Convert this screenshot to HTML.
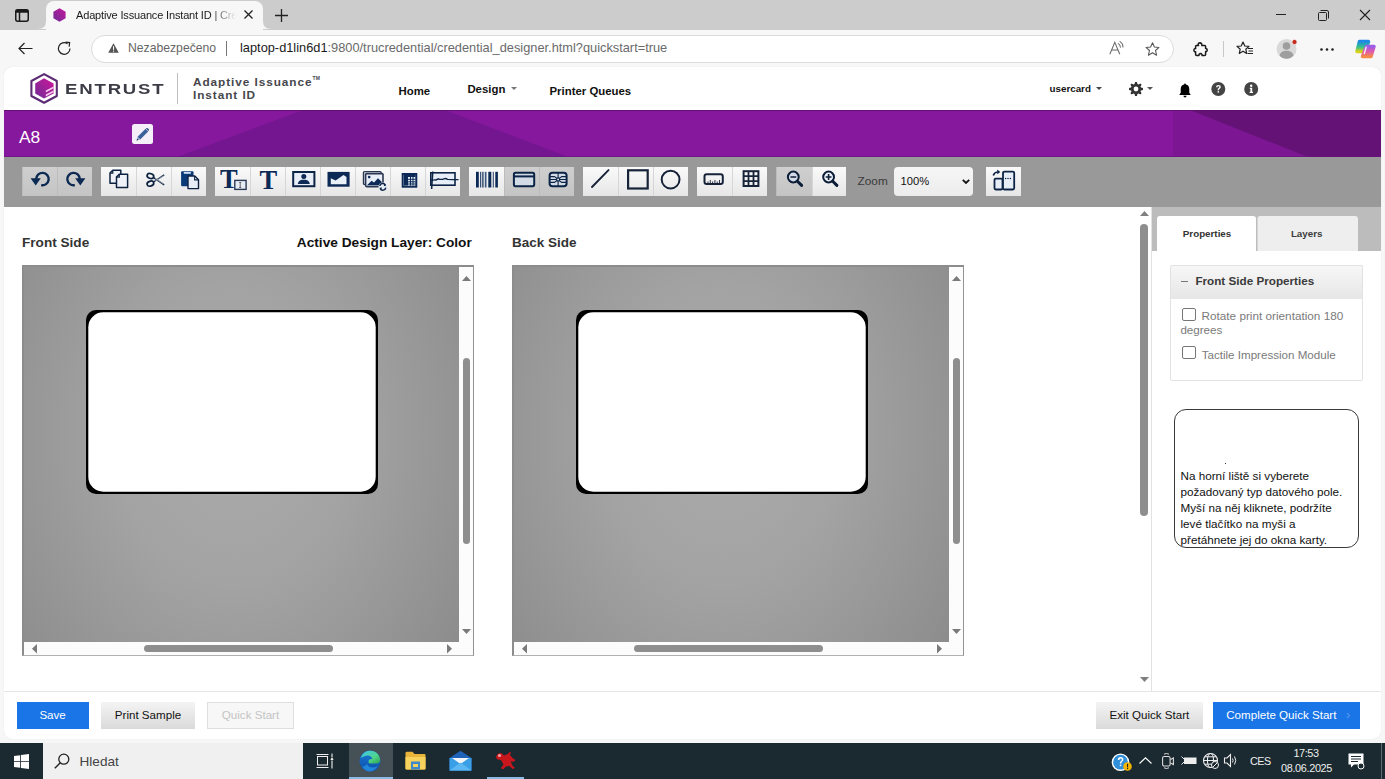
<!DOCTYPE html>
<html><head><meta charset="utf-8">
<style>
*{box-sizing:border-box;margin:0;padding:0}
html,body{width:1385px;height:779px;overflow:hidden}
body{position:relative;background:#f7f7f7;font-family:"Liberation Sans",sans-serif;color:#222}
.a{position:absolute}
.t{position:absolute;white-space:nowrap;line-height:1}
svg{position:absolute;overflow:visible}
/* chrome */
#tabstrip{left:0;top:0;width:1385px;height:30px;background:#cccccc}
#tab{left:46px;top:1px;width:217px;height:30px;background:#f7f7f7;border-radius:8px 8px 0 0}
#addr{left:91px;top:35px;width:1083px;height:28px;background:#fff;border:1px solid #dcdcdc;border-radius:14px}
/* page */
#page{left:4px;top:67px;width:1377px;height:672px;background:#fff;border-radius:8px;overflow:hidden;box-shadow:0 0 1px rgba(0,0,0,.15)}
#banner{left:0;top:43px;width:1377px;height:47px;background:#86189e;overflow:hidden}
#tools{left:0;top:90px;width:1377px;height:50px;background:#999999}
.grp{position:absolute;top:10px;height:29px;background:#f4f4f4;display:flex}
.btn{position:relative;width:35px;height:29px;background:linear-gradient(#fafafa,#e6e6e6);border-left:1px solid #d6d6d6}
.btn:first-child{border-left:none}
.btn.dis{background:linear-gradient(#cfcfcf,#c4c4c4);border-left:1px solid #bcbcbc}
.btn svg{left:0;top:0}
.cv{width:452px;height:391px;border-top:2px solid #8c8c8c;border-left:2px solid #8c8c8c;border-right:1.2px solid #929292;border-bottom:1.5px solid #b0b0b0;background:#fcfcfc}
.vp{position:absolute;left:0;top:0;width:435px;height:374.5px;background:radial-gradient(ellipse 68% 100% at 48% 45%,#ababab 0%,#a3a3a3 40%,#8a8a8a 100%)}
.card{position:absolute}
.vs{position:absolute;left:435px;top:0;width:14px;height:374.5px}
.hs{position:absolute;left:0;top:374.5px;width:435px;height:13px}
.th{position:absolute;background:#8e8e8e;border-radius:3.5px}
.btnb,.btng,.btnd{font-size:11.6px;line-height:26px;text-align:center;white-space:nowrap}
.btnb{background:#1a75e6;color:#fff}
.btng{background:linear-gradient(#f4f4f4,#dadada);color:#111}
.btnd{background:#f7f7f7;border:1px solid #dedede;color:#c4c4c4;line-height:24.6px}
#taskbar{left:0;top:743px;width:1385px;height:36px;background:#1b2930}
</style></head><body>

<!-- ===== browser chrome ===== -->
<div id="tabstrip" class="a"></div>
<!-- sidebar icon -->
<svg style="left:15px;top:9px" width="14" height="13" viewBox="0 0 14 13"><rect x="0.75" y="0.75" width="12.5" height="11.5" rx="2" fill="none" stroke="#1a1a1a" stroke-width="1.5"/><rect x="0.75" y="0.75" width="12.5" height="3" fill="#1a1a1a"/><line x1="4.5" y1="3" x2="4.5" y2="12" stroke="#1a1a1a" stroke-width="1.5"/></svg>
<div id="tab" class="a">
  <svg style="left:-8px;top:20px" width="8" height="8" viewBox="0 0 8 8"><path d="M0 8 Q8 8 8 0 L8 8 Z" fill="#f7f7f7"/></svg>
  <svg style="left:217px;top:20px" width="8" height="8" viewBox="0 0 8 8"><path d="M8 8 Q0 8 0 0 L0 8 Z" fill="#f7f7f7"/></svg>
</div>
<!-- favicon hexagon -->
<svg style="left:53px;top:8px" width="13" height="14" viewBox="0 0 13 14"><defs><linearGradient id="fav" x1="1" y1="0" x2="0" y2="1"><stop offset="0" stop-color="#c4179c"/><stop offset="1" stop-color="#6f2c97"/></linearGradient></defs><path d="M6.5 0.3 L12.6 3.7 V10.3 L6.5 13.7 L0.4 10.3 V3.7 Z" fill="url(#fav)"/></svg>
<div class="t" style="left:76px;top:9.5px;font-size:11px;letter-spacing:-0.16px;color:#1a1a1a;width:160px;overflow:hidden;-webkit-mask-image:linear-gradient(90deg,#000 135px,transparent 160px)">Adaptive Issuance Instant ID | Credential Designer</div>
<svg style="left:244px;top:10px" width="9" height="9" viewBox="0 0 9 9"><path d="M0.5 0.5 L8.5 8.5 M8.5 0.5 L0.5 8.5" stroke="#222" stroke-width="1.3"/></svg>
<svg style="left:275px;top:9px" width="13" height="13" viewBox="0 0 13 13"><path d="M6.5 0 V13 M0 6.5 H13" stroke="#222" stroke-width="1.3"/></svg>
<!-- window controls -->
<svg style="left:1276px;top:14px" width="10" height="2" viewBox="0 0 10 2"><line x1="0" y1="0.5" x2="10" y2="0.5" stroke="#222" stroke-width="1"/></svg>
<svg style="left:1318px;top:10px" width="11" height="11" viewBox="0 0 11 11"><rect x="0.5" y="2.5" width="8" height="8" rx="1" fill="none" stroke="#222" stroke-width="1"/><path d="M2.5 0.5 H9 Q10.5 0.5 10.5 2 V8.5" fill="none" stroke="#222" stroke-width="1"/></svg>
<svg style="left:1360px;top:10px" width="10" height="10" viewBox="0 0 10 10"><path d="M0 0 L10 10 M10 0 L0 10" stroke="#222" stroke-width="1.1"/></svg>

<!-- toolbar -->
<svg style="left:18px;top:42px" width="15" height="13" viewBox="0 0 15 13"><path d="M14.5 6.5 H1 M6.5 1 L1 6.5 L6.5 12" fill="none" stroke="#222" stroke-width="1.2"/></svg>
<svg style="left:57px;top:41px" width="15" height="15" viewBox="0 0 15 15"><path d="M13 7.5 A5.8 5.8 0 1 1 10.5 2.7" fill="none" stroke="#222" stroke-width="1.2"/><path d="M8.6 1.2 L12.6 1.6 L12.2 5.6" fill="none" stroke="#222" stroke-width="1.2"/></svg>
<div id="addr" class="a"></div>
<svg style="left:108px;top:43px" width="11" height="10" viewBox="0 0 11 10"><path d="M5.5 0.3 L10.8 9.7 H0.2 Z" fill="#555"/><rect x="5" y="3.2" width="1.1" height="3.6" fill="#fff"/><rect x="5" y="7.6" width="1.1" height="1.1" fill="#fff"/></svg>
<div class="t" style="left:128px;top:42px;font-size:12.2px;color:#666">Nezabezpečeno</div>
<div class="a" style="left:226px;top:41px;width:1px;height:15px;background:#777"></div>
<div class="t" style="left:240px;top:42px;font-size:12.8px;color:#1a1a1a">laptop-d1lin6d1<span style="color:#6a6a6a">:9800/trucredential/credential_designer.html?quickstart=true</span></div>
<!-- read aloud -->
<svg style="left:1109px;top:41px" width="16" height="14" viewBox="0 0 16 14"><path d="M0.8 13.2 L5.8 1.3 L10.8 13.2 M2.6 9 H9" fill="none" stroke="#6a6a6a" stroke-width="1.05"/><path d="M9.3 2.6 Q11.2 3.6 11.4 6.2 M11 0.6 Q13.8 2 14 6" fill="none" stroke="#6a6a6a" stroke-width="1.05" stroke-linecap="round"/></svg>
<!-- star -->
<svg style="left:1145px;top:41.5px" width="15" height="15" viewBox="0 0 15 15"><path d="M7.5 0.8 L9.4 5 L14 5.4 L10.5 8.5 L11.6 13.2 L7.5 10.8 L3.4 13.2 L4.5 8.5 L1 5.4 L5.6 5 Z" fill="none" stroke="#555" stroke-width="1.05" stroke-linejoin="round"/></svg>
<!-- extensions puzzle -->
<svg style="left:1193px;top:42px" width="15" height="15" viewBox="0 0 15 15"><path d="M5.5 1.2 Q7.5 0.3 8.6 1.8 Q9.2 3 8.8 3.6 H11.8 Q12.6 3.6 12.6 4.4 V6.6 Q14 6.4 14.2 8 Q14.2 9.8 12.6 9.6 V12.4 Q12.6 13.4 11.6 13.4 H9 Q9.3 11.8 7.6 11.6 Q5.9 11.6 6 13.4 H3.6 Q2.6 13.4 2.6 12.4 V9.8 Q1 10 0.9 8.2 Q0.9 6.5 2.6 6.6 V4.4 Q2.6 3.6 3.4 3.6 H5.6 Q4.6 2 5.5 1.2 Z" fill="none" stroke="#1a1a1a" stroke-width="1.5" stroke-linejoin="round"/></svg>
<div class="a" style="left:1223px;top:41px;width:1px;height:16px;background:#c8c8c8"></div>
<!-- favorites -->
<svg style="left:1236px;top:41px" width="18" height="15" viewBox="0 0 18 15"><path d="M7 1 L8.8 5 L13 5.4 L9.8 8.2 L10.7 12.4 L7 10.2 L3.3 12.4 L4.2 8.2 L1 5.4 L5.2 5 Z" fill="none" stroke="#222" stroke-width="1.2" stroke-linejoin="round"/><path d="M12 7.5 H17 M12.5 10 H17 M11.5 12.5 H17" stroke="#222" stroke-width="1.2"/></svg>
<!-- profile -->
<svg style="left:1276px;top:38px" width="22" height="22" viewBox="0 0 22 22"><circle cx="10.5" cy="11" r="10" fill="#d9d9d9"/><circle cx="10.5" cy="8" r="3.8" fill="#9e9e9e"/><path d="M3.5 17.5 Q4.5 12.8 10.5 12.8 Q16.5 12.8 17.5 17.5 Q14.5 20.8 10.5 20.8 Q6.5 20.8 3.5 17.5 Z" fill="#9e9e9e"/><circle cx="18.5" cy="4" r="2.6" fill="#c42b1c" stroke="#f7f7f7" stroke-width="0.8"/></svg>
<!-- more -->
<svg style="left:1320px;top:48px" width="14" height="3" viewBox="0 0 14 3"><circle cx="1.5" cy="1.5" r="1.3" fill="#222"/><circle cx="7" cy="1.5" r="1.3" fill="#222"/><circle cx="12.5" cy="1.5" r="1.3" fill="#222"/></svg>
<!-- copilot -->
<svg style="left:1355px;top:39px" width="21" height="20" viewBox="0 0 21 20"><defs><linearGradient id="cpA" x1="0" y1="0" x2="0" y2="1"><stop offset="0" stop-color="#1e88e5"/><stop offset=".55" stop-color="#35c28a"/><stop offset="1" stop-color="#d9d21a"/></linearGradient><linearGradient id="cpB" x1="0" y1="0" x2="0" y2="1"><stop offset="0" stop-color="#9b5de5"/><stop offset=".5" stop-color="#e05ab0"/><stop offset="1" stop-color="#f58a4a"/></linearGradient></defs><path d="M4.5 2.5 H13.5 L10.5 12.5 H2 Z" fill="url(#cpA)" stroke="url(#cpA)" stroke-width="3.5" stroke-linejoin="round"/><path d="M11.5 7.5 H19 L16 17.5 H7.5 Z" fill="url(#cpB)" stroke="url(#cpB)" stroke-width="3.5" stroke-linejoin="round"/><path d="M11.2 8 L9.3 14.5" stroke="#fff" stroke-width="1.3" stroke-linecap="round" opacity=".9"/></svg>

<!-- ===== page ===== -->
<div id="page" class="a">
  <!-- header (page coords: subtract 4,67) -->
  <svg style="left:26px;top:6px" width="28" height="31" viewBox="0 0 28 31"><defs><linearGradient id="lg1" x1="1" y1="0" x2="0" y2="1"><stop offset="0" stop-color="#cf169a"/><stop offset="1" stop-color="#6f2c97"/></linearGradient></defs><path d="M14.1 1.1 L26.8 8 V23 L14.1 29.8 L1.4 23 V8 Z" fill="none" stroke="#5b2b74" stroke-width="2.1" stroke-linejoin="round"/><path d="M14 5.2 L23.6 10.4 V20.6 L14 25.6 L5.2 20.6 V10.4 Z" fill="url(#lg1)"/><path d="M15.8 17.6 L23.6 13.4 V15.2 L15.8 19.4 Z M15.8 21.6 L23.6 17.4 V19.2 L15.8 23.4 Z" fill="#f6c9f0"/></svg>
  <div class="t" style="left:61px;top:14.8px;font-size:14.3px;font-weight:bold;letter-spacing:1.4px;color:#3c3c46;transform:scaleX(1.3);transform-origin:0 0">ENTRUST</div>
  <div class="a" style="left:173px;top:6px;width:1px;height:31px;background:#bdbdbd"></div>
  <div class="t" style="left:189px;top:9.4px;font-size:11.8px;font-weight:bold;letter-spacing:0.93px;color:#46464c;line-height:13px">Adaptive Issuance<br>Instant ID</div><div class="t" style="left:308.6px;top:9.2px;font-size:5px;font-weight:bold;color:#46464c">TM</div>
  <div class="t" style="left:394.5px;top:18.6px;font-size:11.4px;font-weight:bold;color:#111">Home</div>
  <div class="t" style="left:463.4px;top:16.8px;font-size:11.4px;font-weight:bold;color:#111">Design</div>
  <svg style="left:507px;top:20px" width="6" height="3" viewBox="0 0 6 3"><path d="M0 0 H6 L3 3 Z" fill="#777"/></svg>
  <div class="t" style="left:545.5px;top:18.6px;font-size:11.4px;font-weight:bold;color:#111">Printer Queues</div>
  <div class="t" style="left:1045.5px;top:17.3px;font-size:9.8px;font-weight:bold;color:#111">usercard</div>
  <svg style="left:1091.5px;top:20px" width="6" height="3" viewBox="0 0 6 3"><path d="M0 0 H6 L3 3 Z" fill="#444"/></svg>
  <!-- gear -->
  <svg style="left:1124.5px;top:15px" width="14" height="14" viewBox="0 0 14 14"><path fill="#333" fill-rule="evenodd" d="M6 0 H8 L8.4 2 L9.6 2.5 L11.3 1.4 L12.6 2.7 L11.5 4.4 L12 5.6 L14 6 V8 L12 8.4 L11.5 9.6 L12.6 11.3 L11.3 12.6 L9.6 11.5 L8.4 12 L8 14 H6 L5.6 12 L4.4 11.5 L2.7 12.6 L1.4 11.3 L2.5 9.6 L2 8.4 L0 8 V6 L2 5.6 L2.5 4.4 L1.4 2.7 L2.7 1.4 L4.4 2.5 L5.6 2 Z M7 4.6 A2.4 2.4 0 1 0 7 9.4 A2.4 2.4 0 1 0 7 4.6 Z"/></svg>
  <svg style="left:1143px;top:20px" width="6" height="3" viewBox="0 0 6 3"><path d="M0 0 H6 L3 3 Z" fill="#555"/></svg>
  <!-- bell -->
  <svg style="left:1174.5px;top:16px" width="12" height="15" viewBox="0 0 12 15"><path d="M6 0.5 Q6.9 0.5 6.9 1.5 Q10.3 2.3 10.3 6.3 V9.8 L11.8 12 H0.2 L1.7 9.8 V6.3 Q1.7 2.3 5.1 1.5 Q5.1 0.5 6 0.5 Z" fill="#000"/><path d="M4.4 12.8 H7.6 Q7.4 14.6 6 14.6 Q4.6 14.6 4.4 12.8 Z" fill="#000"/></svg>
  <!-- question -->
  <svg style="left:1207px;top:15px" width="15" height="14" viewBox="0 0 15 14"><circle cx="7.3" cy="7" r="7" fill="#444"/><path d="M5 5.3 Q5 2.9 7.4 2.9 Q9.8 2.9 9.8 5 Q9.8 6.3 8.5 6.9 Q7.9 7.3 7.9 8.2 H6.6 Q6.6 6.7 7.6 6.1 Q8.3 5.7 8.3 5.1 Q8.3 4.2 7.4 4.2 Q6.5 4.2 6.5 5.3 Z" fill="#fff"/><rect x="6.6" y="9.1" width="1.4" height="1.5" fill="#fff"/></svg>
  <!-- info -->
  <svg style="left:1239.5px;top:15px" width="15" height="14" viewBox="0 0 15 14"><circle cx="7.2" cy="7" r="7" fill="#444"/><circle cx="7.2" cy="3.7" r="1.2" fill="#fff"/><path d="M5.8 5.7 H8.2 V9.8 H9 V11 H5.6 V9.8 H6.4 V6.9 H5.8 Z" fill="#fff"/></svg>
  <div id="banner" class="a">
    <svg style="left:0;top:0" width="1377" height="47" viewBox="0 0 1377 47"><path d="M299 0 H441 L564 47 H173 Z" fill="#741690"/><path d="M1169 0 H1377 V47 H1169 Z" fill="#7c1693"/><path d="M1186 0 H1377 V47 H1304 Z" fill="#641276"/><rect x="0" y="0" width="1377" height="1" fill="#5a1068" opacity=".8"/><rect x="0" y="46" width="1377" height="1" fill="#6a1480" opacity=".7"/></svg>
    <div class="t" style="left:15px;top:19.4px;font-size:17.4px;color:#fff">A8</div>
    <div class="a" style="left:128px;top:14px;width:21px;height:19.6px;background:#f3eef8;border-radius:2.5px"></div>
    <svg style="left:132px;top:17.5px" width="13" height="13" viewBox="0 0 13 13"><path d="M9.6 0.8 L12.2 3.4 L4.2 11.4 L1.6 8.8 Z" fill="#3b5f9a"/><path d="M10.6 0 Q11.2 -0.3 11.8 0.3 L12.7 1.2 Q13.3 1.8 13 2.4 L12.6 3 L10 0.4 Z" fill="#2a4a7c"/><path d="M1.6 8.8 L4.2 11.4 L0.6 12.4 Z" fill="#8aa2c8"/><path d="M0.6 12.4 L1.1 10.8 L2.2 11.9 Z" fill="#223"/></svg>
  </div>
  <div id="tools" class="a">
    <!-- abs y 167 => tools-local top 10 ; abs x => local x-4 -->
    <div class="grp" style="left:18px;width:70px">
      <div class="btn dis"><svg width="35" height="29" viewBox="0 0 35 29"><path d="M13.3 12 A6.2 6.2 0 1 1 18.2 18.1" fill="none" stroke="#0c2a52" stroke-width="2.4"/><path d="M7.6 11.2 H17.8 L12.7 18.4 Z" fill="#0c2a52"/></svg></div>
      <div class="btn dis"><svg width="35" height="29" viewBox="0 0 35 29"><path d="M21.7 12 A6.2 6.2 0 1 0 16.8 18.1" fill="none" stroke="#0c2a52" stroke-width="2.4"/><path d="M27.4 11.2 H17.2 L22.3 18.4 Z" fill="#0c2a52"/></svg></div>
    </div>
    <div class="grp" style="left:97px;width:105px">
      <div class="btn"><svg width="35" height="29" viewBox="0 0 35 29"><path d="M11.8 3.2 H19.8 V16.3 H9 V6 Z" fill="#eef2f8" stroke="#0d2240" stroke-width="1.5" stroke-linejoin="round"/><path d="M9 6.2 H11.8 V3.2" fill="none" stroke="#0d2240" stroke-width="1.2"/><path d="M18.3 7.2 H26.6 V20.6 H15.5 V10 Z" fill="#eef2f8" stroke="#0d2240" stroke-width="1.5" stroke-linejoin="round"/><path d="M15.5 10.2 H18.3 V7.2" fill="none" stroke="#0d2240" stroke-width="1.2"/></svg></div>
      <div class="btn"><svg width="35" height="29" viewBox="0 0 35 29"><ellipse cx="13.4" cy="9" rx="3.4" ry="2.4" transform="rotate(20 13.4 9)" fill="none" stroke="#0d2240" stroke-width="1.7"/><ellipse cx="13.4" cy="16.6" rx="3.4" ry="2.4" transform="rotate(-20 13.4 16.6)" fill="none" stroke="#0d2240" stroke-width="1.7"/><path d="M16.6 10.6 L27.2 17.8 M16.6 15 L27.2 7.8" stroke="#0d2240" stroke-width="1.4"/><path d="M18 11.3 L26.5 17 M18 14.3 L26.5 8.6" stroke="#eef2f8" stroke-width="0.5"/></svg></div>
      <div class="btn"><svg width="35" height="29" viewBox="0 0 35 29"><rect x="9.1" y="4.2" width="12.4" height="15" rx="1" fill="#0b3a78"/><rect x="11.8" y="5" width="7" height="1.8" fill="#cfe0f5"/><path d="M16 9 H22.8 L26.5 12.7 V21.6 H16 Z" fill="#e8eef8" stroke="#0d2240" stroke-width="1.4" stroke-linejoin="round"/><path d="M22.6 9 V12.9 H26.5" fill="none" stroke="#0d2240" stroke-width="1.1"/></svg></div>
    </div>
    <div class="grp" style="left:211px;width:245px">
      <div class="btn"><div class="t" style="left:5px;top:-0.8px;font-family:'Liberation Serif',serif;font-weight:bold;font-size:26.5px;line-height:27px;color:#0c2a55">T</div><svg width="35" height="29" viewBox="0 0 35 29"><rect x="19.8" y="13.4" width="11.3" height="9" fill="#e6ecf5" stroke="#2a3a55" stroke-width="1.4"/><path d="M24.2 15.5 H26.2 M25.2 15.5 V20.5 M24.2 20.5 H26.2" stroke="#555" stroke-width="0.9"/></svg></div>
      <div class="btn"><div class="t" style="left:8.5px;top:-0.4px;font-family:'Liberation Serif',serif;font-weight:bold;font-size:26.5px;line-height:27px;color:#0c2a55">T</div></div>
      <div class="btn"><svg width="35" height="29" viewBox="0 0 35 29"><rect x="7.2" y="5" width="21.2" height="14.2" fill="#e8eef8" stroke="#0c2445" stroke-width="2"/><circle cx="17.8" cy="9.6" r="2.5" fill="#0c2a55"/><path d="M11.8 17 Q12.5 13.2 16 12.8 H19.6 Q23.1 13.2 23.8 17 Z" fill="#0c2a55"/></svg></div>
      <div class="btn"><svg width="35" height="29" viewBox="0 0 35 29"><rect x="6.5" y="4.9" width="22.1" height="14.8" fill="#0c2a55"/><path d="M9.8 17.2 V11.2 L14.6 13.4 L22.5 8 L25.5 10 V17.2 Z" fill="#eaf0f8"/></svg></div>
      <div class="btn"><svg width="35" height="29" viewBox="0 0 35 29"><rect x="7.5" y="4.6" width="17.6" height="12.8" rx="1" fill="#e8eef8" stroke="#2a3650" stroke-width="1.4"/><rect x="9.6" y="6.6" width="17.4" height="13" rx="1" fill="#e8eef8" stroke="#2a3650" stroke-width="1.6"/><circle cx="13.2" cy="10.1" r="1.3" fill="#0c2a55"/><path d="M11 18.2 L15.6 13.8 L18 15.6 L22 11.3 L25.8 15 V18.2 Z" fill="#0c2a55"/><circle cx="26.8" cy="19.8" r="4.3" fill="#e8eef8"/><path d="M23.8 19 A3 3 0 0 1 29.4 18 M29.8 20.6 A3 3 0 0 1 24.2 21.6" fill="none" stroke="#0c2445" stroke-width="1.5"/><path d="M28.2 16.5 L30.3 18.5 L27.8 19.3 Z M25.4 23.1 L23.3 21.1 L25.8 20.3 Z" fill="#0c2445"/></svg></div>
      <div class="btn"><svg width="35" height="29" viewBox="0 0 35 29"><rect x="11.7" y="7" width="13.6" height="12.7" fill="#e8eef8" stroke="#0c2a55" stroke-width="2"/><path d="M13 8 H24.4 V10 H17 V18.6 H13 Z" fill="#0c2a55"/><path d="M17 12.3 H24.4 M17 14.8 H24.4 M17 17 H24.4 M19.5 10 V18.6 M22 10 V18.6 M13 12.3 H15.8 M13 14.8 H15.8 M13 17 H15.8" stroke="#0c2a55" stroke-width="1"/></svg></div>
      <div class="btn"><svg width="35" height="29" viewBox="0 0 35 29"><rect x="4.8" y="5.8" width="24.2" height="12.4" fill="#e8eef8" stroke="#0c2445" stroke-width="1.6"/><path d="M6.8 4.5 L5.6 22" stroke="#0c2445" stroke-width="1.5"/><path d="M5.2 13.5 Q8 12.5 10 13 L12.5 11.8 Q15 13 18 11.8 Q20 11 21.5 12.4 Q26 12.6 32.5 12.6" fill="none" stroke="#0c2445" stroke-width="1.4"/></svg></div>
    </div>
    <div class="grp" style="left:465px;width:105px">
      <div class="btn"><svg width="35" height="29" viewBox="0 0 35 29"><g fill="#0b2a55"><rect x="7" y="4.8" width="2.8" height="15.7"/><rect x="11.2" y="4.8" width="1" height="15.7"/><rect x="13.3" y="4.8" width="1.2" height="15.7"/><rect x="15.8" y="4.8" width="1.7" height="15.7" fill="#3c5a80"/><rect x="19.3" y="4.8" width="3" height="15.7"/><rect x="23.8" y="4.8" width="0.9" height="15.7"/><rect x="26.3" y="4.8" width="2.6" height="15.7"/></g></svg></div>
      <div class="btn dis"><svg width="35" height="29" viewBox="0 0 35 29"><rect x="8.9" y="5.8" width="20.3" height="13.4" rx="1.6" fill="#d3dbe7" stroke="#0c2445" stroke-width="2"/><rect x="8.9" y="8.4" width="20.3" height="2" fill="#0c2445"/></svg></div>
      <div class="btn dis"><svg width="35" height="29" viewBox="0 0 35 29"><rect x="9.6" y="5.8" width="17" height="13.4" rx="2.8" fill="#d3dbe7" stroke="#0c2445" stroke-width="2"/><circle cx="18.1" cy="12.5" r="1.6" fill="none" stroke="#0c2445" stroke-width="1.2"/><path d="M9.6 9.6 H14.5 L16.8 11.4 M9.6 12.5 H16.5 M9.6 15.4 H14.5 L16.8 13.6 M26.6 9.6 H21.7 L19.4 11.4 M26.6 12.5 H19.7 M26.6 15.4 H21.7 L19.4 13.6 M18.1 5.8 V10.9 M18.1 14.1 V19.2" fill="none" stroke="#0c2445" stroke-width="1.1"/></svg></div>
    </div>
    <div class="grp" style="left:579px;width:105px">
      <div class="btn"><svg width="35" height="29" viewBox="0 0 35 29"><path d="M9 20 L25.5 3.1" stroke="#172339" stroke-width="1.9" stroke-linecap="round"/></svg></div>
      <div class="btn"><svg width="35" height="29" viewBox="0 0 35 29"><rect x="9.1" y="3.3" width="19.6" height="18.2" fill="none" stroke="#172339" stroke-width="2.2"/></svg></div>
      <div class="btn"><svg width="35" height="29" viewBox="0 0 35 29"><circle cx="16.6" cy="12.6" r="8.9" fill="none" stroke="#172339" stroke-width="2"/></svg></div>
    </div>
    <div class="grp" style="left:693px;width:70px">
      <div class="btn"><svg width="35" height="29" viewBox="0 0 35 29"><rect x="7.5" y="7.3" width="18.3" height="9.6" rx="2.2" fill="none" stroke="#172339" stroke-width="2"/><path d="M11 16.9 V14.5 M13.3 16.9 V13 M15.6 16.9 V14.5 M17.9 16.9 V13 M20.2 16.9 V14.5 M22.5 16.9 V13" stroke="#172339" stroke-width="0.9"/></svg></div>
      <div class="btn"><svg width="35" height="29" viewBox="0 0 35 29"><rect x="10.6" y="4.2" width="14.8" height="14.8" fill="none" stroke="#172339" stroke-width="2"/><path d="M15.5 4.2 V19 M20.5 4.2 V19 M10.6 9.1 H25.4 M10.6 14.1 H25.4" stroke="#172339" stroke-width="1.8"/></svg></div>
    </div>
    <div class="grp" style="left:771.5px;width:70px">
      <div class="btn dis" style="width:36px"><svg width="36" height="29" viewBox="0 0 36 29"><circle cx="16.3" cy="10" r="5.4" fill="#d3dbe7" stroke="#0c1e38" stroke-width="2"/><path d="M13.4 10 H19.2" stroke="#0c1e38" stroke-width="1.6"/><path d="M20.4 14.2 L24.6 18.4" stroke="#0c1e38" stroke-width="3" stroke-linecap="round"/></svg></div>
      <div class="btn" style="width:34px"><svg width="34" height="29" viewBox="0 0 34 29"><circle cx="15.6" cy="10" r="5.4" fill="#eef2f8" stroke="#0c1e38" stroke-width="2"/><path d="M12.7 10 H18.5 M15.6 7.1 V12.9" stroke="#0c1e38" stroke-width="1.6"/><path d="M19.7 14.2 L23.9 18.4" stroke="#0c1e38" stroke-width="3" stroke-linecap="round"/></svg></div>
    </div>
    <div class="t" style="left:853.6px;top:19.4px;font-size:11.8px;color:#3a3a3a">Zoom</div>
    <div class="a" style="left:890px;top:10px;width:79px;height:28.5px;border-radius:4px;background:linear-gradient(#f6f6f6,#ececec)"></div>
    <div class="t" style="left:896.5px;top:19.2px;font-size:11.2px;color:#111">100%</div>
    <svg style="left:958px;top:21.5px" width="8" height="5" viewBox="0 0 8 5"><path d="M0.8 0.8 L4 4 L7.2 0.8" fill="none" stroke="#111" stroke-width="1.8"/></svg>
    <div class="grp" style="left:982px;width:35px;height:29.5px;top:9.5px">
      <div class="btn"><svg width="35" height="29" viewBox="0 0 35 29"><rect x="8.5" y="11.6" width="8" height="10.9" rx="1.2" fill="#e8eef8" stroke="#0c2445" stroke-width="1.8"/><rect x="17" y="4.6" width="11.2" height="17.9" rx="1.4" fill="#e8eef8" stroke="#0c2445" stroke-width="1.8"/><circle cx="19.6" cy="11.5" r="0.75" fill="#0c2445"/><circle cx="22" cy="11.5" r="0.75" fill="#0c2445"/><circle cx="24.4" cy="11.5" r="0.75" fill="#0c2445"/><path d="M7.3 8.4 Q8.2 5.3 11.6 5" fill="none" stroke="#0c2445" stroke-width="1.7"/><path d="M11.2 2.6 L14.3 4.9 L11.2 7.3 Z" fill="#0c2445"/></svg></div>
    </div>
  </div>
  <!-- ===== content (page coords = abs - (4,67)) ===== -->
  <div class="t" style="left:18px;top:168.9px;font-size:13.6px;font-weight:bold;color:#333">Front Side</div>
  <div class="t" style="left:292.8px;top:168.8px;font-size:13.7px;font-weight:bold;color:#111">Active Design Layer: Color</div>
  <div class="t" style="left:508px;top:168.6px;font-size:13.5px;font-weight:bold;color:#333">Back Side</div>

  <!-- front canvas: abs x22 y265 -->
  <div class="a cv" style="left:18px;top:198px">
    <div class="vp"></div>
    <svg class="card" style="left:62px;top:43.2px" width="293" height="185" viewBox="0 0 293 185"><rect x="0" y="0" width="292" height="184" rx="10" fill="#000"/><rect x="2.3" y="2.3" width="287.4" height="179.4" rx="15" fill="#fff"/></svg>
    <div class="vs"><svg style="left:3px;top:8.5px" width="9" height="5" viewBox="0 0 9 5"><path d="M0 5 L4.5 0 L9 5 Z" fill="#7a7a7a"/></svg><div class="th" style="left:4px;top:91px;width:7px;height:186px"></div><svg style="left:3px;top:362px" width="9" height="5" viewBox="0 0 9 5"><path d="M0 0 L4.5 5 L9 0 Z" fill="#7a7a7a"/></svg></div>
    <div class="hs"><svg style="left:8px;top:2.5px" width="5" height="9.5" viewBox="0 0 5 9.5"><path d="M5 0 L0 4.75 L5 9.5 Z" fill="#7a7a7a"/></svg><div class="th" style="left:120px;top:3.5px;width:189px;height:7px"></div><svg style="left:423px;top:2.5px" width="5" height="9.5" viewBox="0 0 5 9.5"><path d="M0 0 L5 4.75 L0 9.5 Z" fill="#7a7a7a"/></svg></div>
  </div>
  <!-- back canvas: abs x511.5 -->
  <div class="a cv" style="left:507.5px;top:198px">
    <div class="vp"></div>
    <svg class="card" style="left:62px;top:43.2px" width="293" height="185" viewBox="0 0 293 185"><rect x="0" y="0" width="292" height="184" rx="10" fill="#000"/><rect x="2.3" y="2.3" width="287.4" height="179.4" rx="15" fill="#fff"/></svg>
    <div class="vs"><svg style="left:3px;top:8.5px" width="9" height="5" viewBox="0 0 9 5"><path d="M0 5 L4.5 0 L9 5 Z" fill="#7a7a7a"/></svg><div class="th" style="left:4px;top:91px;width:7px;height:186px"></div><svg style="left:3px;top:362px" width="9" height="5" viewBox="0 0 9 5"><path d="M0 0 L4.5 5 L9 0 Z" fill="#7a7a7a"/></svg></div>
    <div class="hs"><svg style="left:8px;top:2.5px" width="5" height="9.5" viewBox="0 0 5 9.5"><path d="M5 0 L0 4.75 L5 9.5 Z" fill="#7a7a7a"/></svg><div class="th" style="left:120px;top:3.5px;width:189px;height:7px"></div><svg style="left:423px;top:2.5px" width="5" height="9.5" viewBox="0 0 5 9.5"><path d="M0 0 L5 4.75 L0 9.5 Z" fill="#7a7a7a"/></svg></div>
  </div>

  <!-- main scrollbar abs x1140-1148 -->
  <svg style="left:1136px;top:144px" width="9" height="5" viewBox="0 0 9 5"><path d="M0 5 L4.5 0 L9 5 Z" fill="#7f7f7f"/></svg>
  <div class="a th" style="left:1136.3px;top:157px;width:7.8px;height:292px;border-radius:4px"></div>
  <svg style="left:1136px;top:609.5px" width="9" height="5" viewBox="0 0 9 5"><path d="M0 0 L4.5 5 L9 0 Z" fill="#7f7f7f"/></svg>

  <!-- right panel abs x1151.5-1381 -->
  <div class="a" style="left:1147px;top:140px;width:1px;height:484px;background:#e2e2e2"></div>
  <div class="a" style="left:1148px;top:140px;width:229px;height:44.3px;background:#bcbcbc"></div>
  <div class="a" style="left:1153.3px;top:149.3px;width:99px;height:35px;background:#fff;border-radius:3px 3px 0 0"></div>
  <div class="a" style="left:1252.5px;top:149.3px;width:101px;height:35px;background:#eeeeee;border-radius:3px 3px 0 0;border-left:1px solid #d6d6d6"></div>
  <div class="t" style="left:1178.8px;top:162.4px;font-size:9.8px;font-weight:bold;color:#333">Properties</div>
  <div class="t" style="left:1286.9px;top:162.4px;font-size:9.8px;font-weight:bold;color:#3c3c3c">Layers</div>

  <div class="a" style="left:1166.4px;top:198px;width:193px;height:115.5px;border:1px solid #e2e2e2;border-radius:2px;background:#fff"></div>
  <div class="a" style="left:1166.4px;top:198px;width:193px;height:33.7px;border:1px solid #e2e2e2;border-bottom:none;border-radius:2px 2px 0 0;background:linear-gradient(#f7f7f7,#e6e6e6)"></div>
  <div class="a" style="left:1177px;top:213.5px;width:7px;height:1.6px;background:#777"></div>
  <div class="t" style="left:1191.4px;top:207.6px;font-size:11.7px;font-weight:bold;color:#3a3a3a">Front Side Properties</div>
  <div class="a" style="left:1178px;top:240.5px;width:13.5px;height:13px;border:1px solid #777;border-radius:2px;background:#fff"></div>
  <div class="t" style="left:1197.5px;top:243.1px;font-size:11.75px;color:#7a7a7a">Rotate print orientation 180</div>
  <div class="t" style="left:1176.4px;top:256.8px;font-size:11.6px;color:#7a7a7a">degrees</div>
  <div class="a" style="left:1178px;top:279.4px;width:13.5px;height:13px;border:1px solid #777;border-radius:2px;background:#fff"></div>
  <div class="t" style="left:1197.7px;top:281.9px;font-size:11.6px;color:#7a7a7a">Tactile Impression Module</div>

  <!-- tooltip abs 1174-1359 x 409-548 -->
  <div class="a" style="left:1170px;top:342.2px;width:185px;height:139.3px;border:1px solid #3a3a3a;border-radius:12px;background:#fff"></div>
  <div class="a" style="left:1221px;top:395.5px;width:1px;height:1px;background:#333"></div>
  <div class="a" style="left:1176.5px;top:401px;font-size:11.7px;line-height:16px;color:#111;white-space:nowrap">Na horní liště si vyberete<br>požadovaný typ datového pole.<br>Myší na něj kliknete, podržíte<br>levé tlačítko na myši a<br>přetáhnete jej do okna karty.</div>

  <!-- footer -->
  <div class="a" style="left:0;top:624px;width:1377px;height:1px;background:#e6e6e6"></div>
  <div class="a btnb" style="left:12.6px;top:635.4px;width:72px;height:26.6px">Save</div>
  <div class="a btng" style="left:97px;top:635.4px;width:94px;height:26.6px">Print Sample</div>
  <div class="a btnd" style="left:203px;top:635.4px;width:87px;height:26.6px">Quick Start</div>
  <div class="a btng" style="left:1091.9px;top:635.2px;width:107px;height:26.4px">Exit Quick Start</div>
  <div class="a btnb" style="left:1208.6px;top:635.2px;width:147.5px;height:26.4px;padding-right:10px">Complete Quick Start<span style="position:absolute;left:133.5px;top:0px;font-size:13px;color:#5d9cf0">&#x203A;</span></div>
</div>

<div id="taskbar" class="a">
  <!-- windows logo -->
  <svg style="left:14px;top:11px" width="15" height="15" viewBox="0 0 15 15"><path d="M0 2.1 L6.2 1.2 V7 H0 Z M7 1.1 L15 0 V7 H7 Z M0 7.8 H6.2 V13.8 L0 12.9 Z M7 7.8 H15 V15 L7 13.9 Z" fill="#fff"/></svg>
  <div class="a" style="left:43px;top:0;width:260px;height:36px;background:#f0f0f0"></div>
  <svg style="left:54px;top:10px" width="16" height="16" viewBox="0 0 16 16"><circle cx="9.8" cy="6.2" r="5" fill="none" stroke="#222" stroke-width="1.3"/><path d="M6.3 9.7 L0.8 15.2" stroke="#222" stroke-width="1.4"/></svg>
  <div class="t" style="left:79.5px;top:12px;font-size:13.6px;color:#444">Hledat</div>
  <!-- task view -->
  <svg style="left:316px;top:10px" width="18" height="16" viewBox="0 0 18 16"><rect x="1.5" y="3.5" width="10" height="8.5" fill="none" stroke="#eee" stroke-width="1"/><path d="M0.5 1.5 H12.5 M0.5 14.5 H12.5 M16 0.5 V4.5 M16 8 V15.5" stroke="#eee" stroke-width="1.1"/><circle cx="16" cy="6.3" r="1.2" fill="#eee"/></svg>
  <!-- edge highlighted -->
  <div class="a" style="left:349px;top:0;width:44px;height:36px;background:#465157"></div>
  <div class="a" style="left:349px;top:33.5px;width:44px;height:2.5px;background:#8bbbe0"></div>
  <svg style="left:359px;top:7px" width="22" height="22" viewBox="0 0 22 22"><defs><linearGradient id="eg1" x1="0" y1="0" x2="1" y2="1"><stop offset="0" stop-color="#41c4f0"/><stop offset=".6" stop-color="#4fd68a"/><stop offset="1" stop-color="#2f9c4f"/></linearGradient><linearGradient id="eg2" x1="0" y1="0" x2="0" y2="1"><stop offset="0" stop-color="#1c7fd6"/><stop offset="1" stop-color="#0b4aa8"/></linearGradient></defs><circle cx="11" cy="11" r="10.5" fill="url(#eg2)"/><path d="M2 8 Q4 1 11 0.8 Q19 0.8 21.2 9 Q21.5 13 18 13.5 H11 Q9 13.2 9.5 11 Q10 8.5 13.5 9 Q12 5 8 5.5 Q4 6 2 8 Z" fill="url(#eg1)"/><path d="M8 14 Q9.5 17.5 14 17.5 Q17 17.2 19 15.8 Q16 21.5 10.5 21.4 Q5 21 3 16 Q5.5 17.5 8 14 Z" fill="#2a9bf0" opacity=".7"/></svg>
  <!-- folder -->
  <svg style="left:405px;top:8px" width="21" height="19" viewBox="0 0 21 19"><path d="M0.5 2 Q0.5 0.8 1.8 0.8 H7.5 L9.5 3 H19.5 Q20.5 3 20.5 4 V17.5 Q20.5 18.5 19.5 18.5 H1.5 Q0.5 18.5 0.5 17.5 Z" fill="#e8b43a"/><path d="M0.5 6 H20.5 V17.5 Q20.5 18.5 19.5 18.5 H1.5 Q0.5 18.5 0.5 17.5 Z" fill="#f7d25c"/><rect x="6" y="10.5" width="9" height="8" fill="#3d89c9"/><rect x="8" y="13" width="5" height="3" fill="#f7d25c"/></svg>
  <!-- mail -->
  <svg style="left:449px;top:7px" width="23" height="21" viewBox="0 0 23 21"><path d="M0.5 8 L11.5 0.8 L22.5 8 V20.5 H0.5 Z" fill="#1e63b8"/><path d="M0.5 8 H22.5 V20.5 H0.5 Z" fill="#3a9fe6"/><path d="M3 8 H20 L11.5 14 Z" fill="#f2f6fb"/><path d="M0.5 20.5 L11.5 12.5 L22.5 20.5 Z" fill="#5bb8f2"/></svg>
  <!-- red app -->
  <div class="a" style="left:487px;top:33.5px;width:37px;height:2.5px;background:#8bbbe0"></div>
  <svg style="left:494px;top:8px" width="22" height="20" viewBox="0 0 22 20"><path d="M3 4 Q5 1 8 2.5 L10 4.5 L14 3 Q15 0.5 17 1 L16 4 L18.5 7 L21.5 9 L19.5 11 L17 10 L18 14 L21 17 L18.5 18 L15.5 15 L12 15.5 L9 18.5 L7 17 L9.5 13.5 L7 9 L3.5 8.5 Q1 6.5 3 4 Z" fill="#c8161d"/><circle cx="5.5" cy="4.5" r="1.6" fill="#f0a0a0"/></svg>
  <!-- tray -->
  <svg style="left:1110px;top:752px;display:none"></svg>
  <svg style="left:1110.5px;top:9.5px" width="22" height="19" viewBox="0 0 22 19"><circle cx="9.5" cy="9.2" r="8.8" fill="#fff"/><circle cx="9.5" cy="9.2" r="7.4" fill="#2f8fd8"/><path d="M6.8 7 Q6.8 4 9.6 4 Q12.4 4 12.4 6.6 Q12.4 8 11 8.8 Q10.3 9.3 10.3 10.6 H8.8 Q8.8 8.8 10 8 Q10.8 7.5 10.8 6.7 Q10.8 5.5 9.6 5.5 Q8.4 5.5 8.4 7 Z" fill="#fff"/><rect x="8.8" y="11.6" width="1.5" height="1.6" fill="#fff"/><circle cx="16.5" cy="13.5" r="4.3" fill="#f4b400"/><rect x="16" y="10.8" width="1.1" height="3.6" fill="#222"/><rect x="16" y="15" width="1.1" height="1.1" fill="#222"/></svg>
  <svg style="left:1139px;top:13.5px" width="13" height="7" viewBox="0 0 13 7"><path d="M0.5 6.5 L6.5 0.8 L12.5 6.5" fill="none" stroke="#fff" stroke-width="1.1"/></svg>
  <svg style="left:1162px;top:10px" width="12" height="16" viewBox="0 0 12 16"><rect x="0.6" y="3.5" width="7.5" height="9.5" rx="1.5" fill="none" stroke="#ddd" stroke-width="1.1"/><path d="M8.5 6.5 L11.4 5 V11.5 L8.5 10" fill="none" stroke="#ddd" stroke-width="1.1"/><path d="M2 1.2 Q4.5 -0.2 7 1.2 M2 14.8 Q4.5 16.2 7 14.8" fill="none" stroke="#ddd" stroke-width="1"/></svg>
  <svg style="left:1181px;top:12.5px" width="16" height="9" viewBox="0 0 16 9"><rect x="3" y="1.5" width="12.5" height="6.5" fill="#eee"/><path d="M0.5 0.5 L3 3 M0.5 8.5 L3 6" stroke="#eee" stroke-width="1"/></svg>
  <svg style="left:1203px;top:9.5px" width="16" height="16" viewBox="0 0 16 16"><circle cx="7.5" cy="7.5" r="7" fill="none" stroke="#eee" stroke-width="1.1"/><ellipse cx="7.5" cy="7.5" rx="3" ry="7" fill="none" stroke="#eee" stroke-width="1.1"/><path d="M0.5 7.5 H14.5 M1.8 3.8 H13.2 M1.8 11.2 H13.2" stroke="#eee" stroke-width="1"/><circle cx="12" cy="12" r="3.5" fill="#1b2930" stroke="#eee" stroke-width="1"/><path d="M10 14 L14 10" stroke="#eee" stroke-width="1"/></svg>
  <svg style="left:1224px;top:10px" width="14" height="15" viewBox="0 0 14 15"><path d="M0.5 5 H3 L6.5 1.5 V13.5 L3 10 H0.5 Z" fill="none" stroke="#eee" stroke-width="1.1"/><path d="M8.5 5.5 Q9.8 7.5 8.5 9.5 M10.5 3.5 Q13 7.5 10.5 11.5" fill="none" stroke="#eee" stroke-width="1"/></svg>
  <div class="t" style="left:1250px;top:12.5px;font-size:10.8px;letter-spacing:-0.5px;color:#eee">CES</div>
  <div class="t" style="left:1293.4px;top:4.6px;font-size:10.9px;letter-spacing:-0.4px;color:#eee">17:53</div>
  <div class="t" style="left:1281px;top:20px;font-size:10.9px;letter-spacing:-0.35px;color:#eee">08.06.2025</div>
  <svg style="left:1348px;top:9.5px" width="17" height="17" viewBox="0 0 17 17"><path d="M0.5 0.5 H15.5 V11.5 H6 L3 14.5 V11.5 H0.5 Z" fill="#fff"/><path d="M3 3.5 H13 M3 6 H13 M3 8.5 H10" stroke="#1b2930" stroke-width="1"/><circle cx="13" cy="13" r="3" fill="#1b2930" stroke="#fff" stroke-width="1"/></svg>
  <div class="a" style="left:1381px;top:0;width:1px;height:36px;background:#5d6a70"></div>
</div>

</body></html>
